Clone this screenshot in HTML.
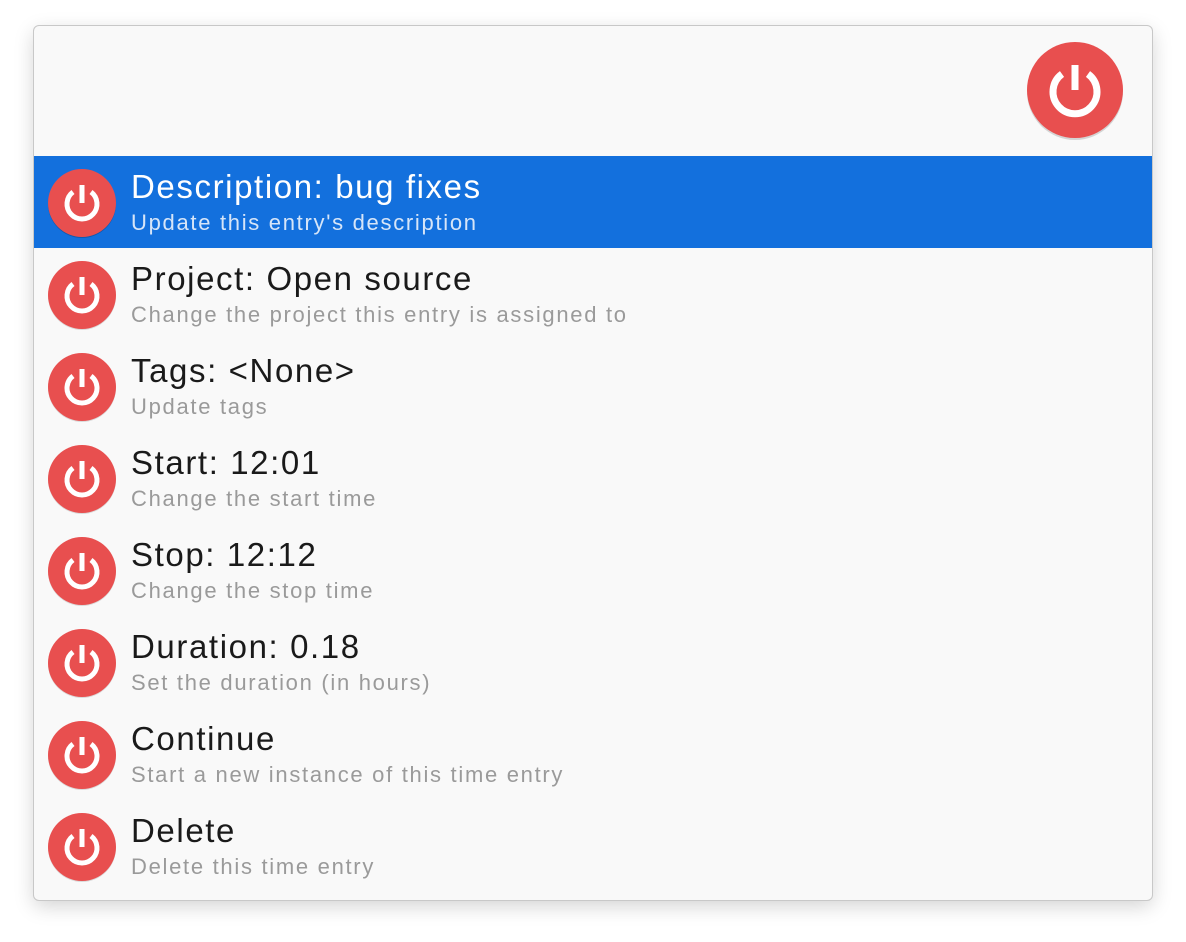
<!DOCTYPE html>
<html><head><style>
body{margin:0;width:1186px;height:942px;background:#fff;position:relative;overflow:hidden;font-family:"Liberation Sans",sans-serif}
.win{position:absolute;left:34px;top:26px;width:1118px;height:874px;background:#f9f9f9;border-radius:5px;box-shadow:0 0 0 1px #c8c8c8,0 6px 20px rgba(0,0,0,.18);overflow:hidden}
.row{position:absolute;left:0;width:1118px;height:92px}
.row.sel{background:#1370dd}
.row svg{position:absolute;left:13px;top:12px}
.t{position:absolute;left:97px;top:12px;font-size:33px;letter-spacing:1.6px;color:#1a1a1a;white-space:nowrap}
.s{position:absolute;left:97px;top:54px;font-size:22px;letter-spacing:1.7px;color:#9a9a9a;white-space:nowrap}
.sel .t{color:#fff}.sel .s{color:#d6e5f8}
</style></head><body>
<div class="win">
<svg style="position:absolute;left:991px;top:15px" width="100" height="100" viewBox="0 0 100 100"><circle cx="50" cy="51" r="48" fill="#000" opacity=".15"/><circle cx="50" cy="49" r="48" fill="#e84f4f"/><path d="M37 33 A22 22 0 1 0 63 33" fill="none" stroke="#fff" stroke-width="7"/><rect x="46.5" y="24" width="7" height="25" fill="#fff"/></svg>
<div class="row sel" style="top:130px"><svg width="70" height="70" viewBox="0 0 70 70"><circle cx="35" cy="36" r="34" fill="#000" opacity=".2"/><circle cx="35" cy="35" r="34" fill="#e84f4f"/><path d="M26 24 A15 15 0 1 0 44 24" fill="none" stroke="#fff" stroke-width="5"/><rect x="32.5" y="17" width="5" height="18" fill="#fff"/></svg><div class="t">Description: bug fixes</div><div class="s">Update this entry's description</div></div>
<div class="row" style="top:222px"><svg width="70" height="70" viewBox="0 0 70 70"><circle cx="35" cy="36" r="34" fill="#000" opacity=".12"/><circle cx="35" cy="35" r="34" fill="#e84f4f"/><path d="M26 24 A15 15 0 1 0 44 24" fill="none" stroke="#fff" stroke-width="5"/><rect x="32.5" y="17" width="5" height="18" fill="#fff"/></svg><div class="t">Project: Open source</div><div class="s">Change the project this entry is assigned to</div></div>
<div class="row" style="top:314px"><svg width="70" height="70" viewBox="0 0 70 70"><circle cx="35" cy="36" r="34" fill="#000" opacity=".12"/><circle cx="35" cy="35" r="34" fill="#e84f4f"/><path d="M26 24 A15 15 0 1 0 44 24" fill="none" stroke="#fff" stroke-width="5"/><rect x="32.5" y="17" width="5" height="18" fill="#fff"/></svg><div class="t">Tags: &lt;None&gt;</div><div class="s">Update tags</div></div>
<div class="row" style="top:406px"><svg width="70" height="70" viewBox="0 0 70 70"><circle cx="35" cy="36" r="34" fill="#000" opacity=".12"/><circle cx="35" cy="35" r="34" fill="#e84f4f"/><path d="M26 24 A15 15 0 1 0 44 24" fill="none" stroke="#fff" stroke-width="5"/><rect x="32.5" y="17" width="5" height="18" fill="#fff"/></svg><div class="t">Start: 12:01</div><div class="s">Change the start time</div></div>
<div class="row" style="top:498px"><svg width="70" height="70" viewBox="0 0 70 70"><circle cx="35" cy="36" r="34" fill="#000" opacity=".12"/><circle cx="35" cy="35" r="34" fill="#e84f4f"/><path d="M26 24 A15 15 0 1 0 44 24" fill="none" stroke="#fff" stroke-width="5"/><rect x="32.5" y="17" width="5" height="18" fill="#fff"/></svg><div class="t">Stop: 12:12</div><div class="s">Change the stop time</div></div>
<div class="row" style="top:590px"><svg width="70" height="70" viewBox="0 0 70 70"><circle cx="35" cy="36" r="34" fill="#000" opacity=".12"/><circle cx="35" cy="35" r="34" fill="#e84f4f"/><path d="M26 24 A15 15 0 1 0 44 24" fill="none" stroke="#fff" stroke-width="5"/><rect x="32.5" y="17" width="5" height="18" fill="#fff"/></svg><div class="t">Duration: 0.18</div><div class="s">Set the duration (in hours)</div></div>
<div class="row" style="top:682px"><svg width="70" height="70" viewBox="0 0 70 70"><circle cx="35" cy="36" r="34" fill="#000" opacity=".12"/><circle cx="35" cy="35" r="34" fill="#e84f4f"/><path d="M26 24 A15 15 0 1 0 44 24" fill="none" stroke="#fff" stroke-width="5"/><rect x="32.5" y="17" width="5" height="18" fill="#fff"/></svg><div class="t">Continue</div><div class="s">Start a new instance of this time entry</div></div>
<div class="row" style="top:774px"><svg width="70" height="70" viewBox="0 0 70 70"><circle cx="35" cy="36" r="34" fill="#000" opacity=".12"/><circle cx="35" cy="35" r="34" fill="#e84f4f"/><path d="M26 24 A15 15 0 1 0 44 24" fill="none" stroke="#fff" stroke-width="5"/><rect x="32.5" y="17" width="5" height="18" fill="#fff"/></svg><div class="t">Delete</div><div class="s">Delete this time entry</div></div>
</div>
</body></html>
